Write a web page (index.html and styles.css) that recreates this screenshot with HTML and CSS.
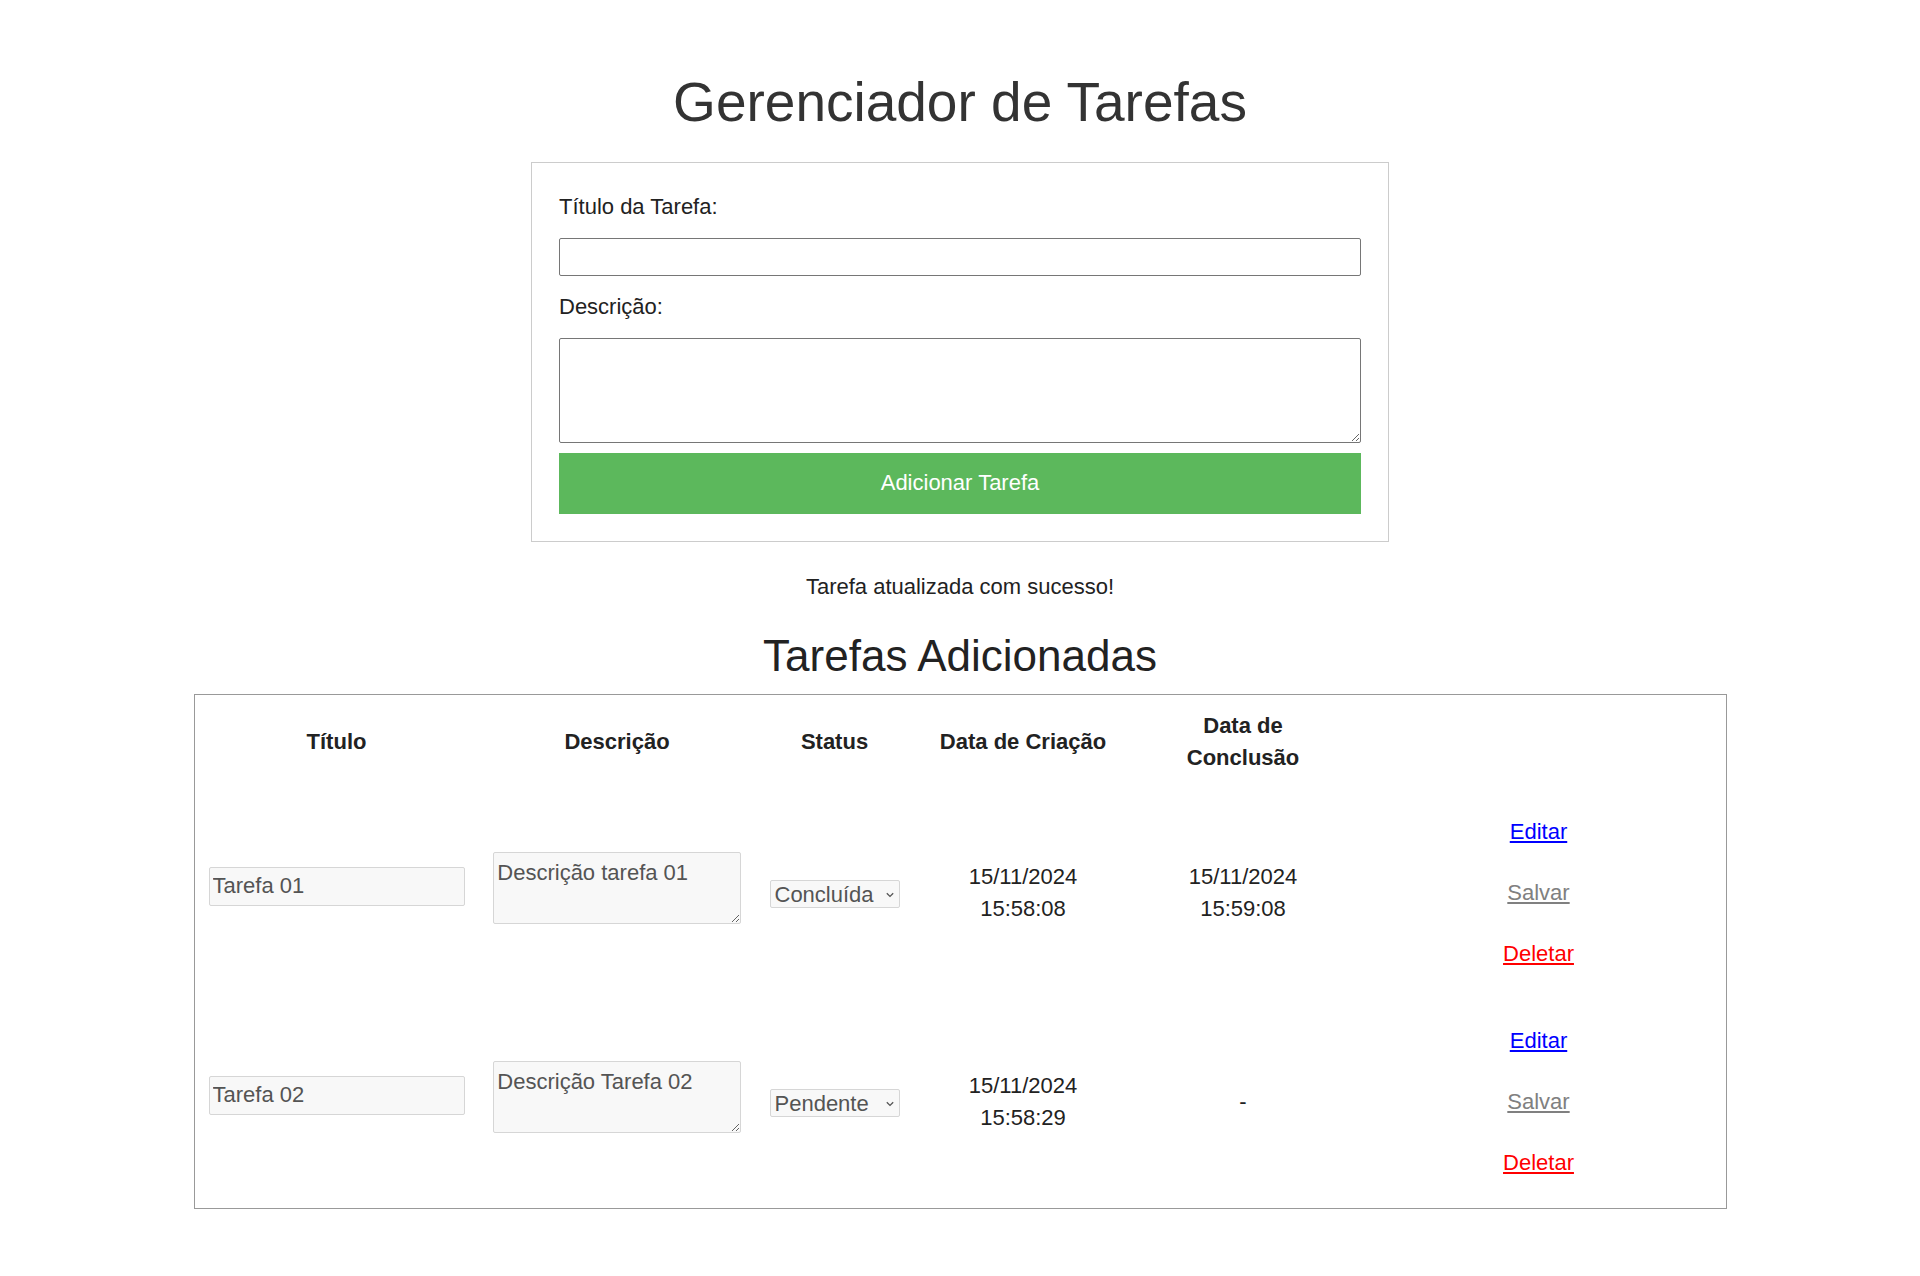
FILE: index.html
```html
<!DOCTYPE html>
<html lang="pt-BR">
<head>
<meta charset="utf-8">
<title>Gerenciador de Tarefas</title>
<link rel="stylesheet" href="styles.css">
</head>
<body>
  <h1 class="page-title">Gerenciador de Tarefas</h1>

  <form class="task-form">
    <label class="field-label" for="titulo">Título da Tarefa:</label>
    <input class="field-input" id="titulo" type="text">
    <label class="field-label" for="descricao">Descrição:</label>
    <textarea class="field-textarea" id="descricao"></textarea>
    <button class="add-btn" type="button">Adicionar Tarefa</button>
  </form>

  <p class="message">Tarefa atualizada com sucesso!</p>

  <h2 class="section-title">Tarefas Adicionadas</h2>

  <table class="tasks">
    <colgroup>
      <col class="c-title">
      <col class="c-desc">
      <col class="c-status">
      <col class="c-created">
      <col class="c-done">
      <col class="c-actions">
    </colgroup>
    <thead>
      <tr>
        <th>Título</th>
        <th>Descrição</th>
        <th>Status</th>
        <th>Data de Criação</th>
        <th>Data de<br>Conclusão</th>
        <th></th>
      </tr>
    </thead>
    <tbody>
      <tr>
        <td><input class="cell-input" type="text" value="Tarefa 01" readonly></td>
        <td><textarea class="cell-textarea" readonly>Descrição tarefa 01</textarea></td>
        <td>
          <span class="select-wrap">
            <select class="status">
              <option>Pendente</option>
              <option selected>Concluída</option>
            </select>
            <svg class="chevron" viewBox="0 0 8 6" aria-hidden="true"><path d="M0.8 1.2 L4 4.4 L7.2 1.2"/></svg>
          </span>
        </td>
        <td class="date">15/11/2024<br>15:58:08</td>
        <td class="date">15/11/2024<br>15:59:08</td>
        <td>
          <div class="actions">
            <a class="link edit" href="#">Editar</a>
            <a class="link save" href="#">Salvar</a>
            <a class="link delete" href="#">Deletar</a>
          </div>
        </td>
      </tr>
      <tr>
        <td><input class="cell-input" type="text" value="Tarefa 02" readonly></td>
        <td><textarea class="cell-textarea" readonly>Descrição Tarefa 02</textarea></td>
        <td>
          <span class="select-wrap">
            <select class="status">
              <option selected>Pendente</option>
              <option>Concluída</option>
            </select>
            <svg class="chevron" viewBox="0 0 8 6" aria-hidden="true"><path d="M0.8 1.2 L4 4.4 L7.2 1.2"/></svg>
          </span>
        </td>
        <td class="date">15/11/2024<br>15:58:29</td>
        <td class="date">-</td>
        <td>
          <div class="actions">
            <a class="link edit" href="#">Editar</a>
            <a class="link save" href="#">Salvar</a>
            <a class="link delete" href="#">Deletar</a>
          </div>
        </td>
      </tr>
    </tbody>
  </table>
</body>
</html>
```

FILE: styles.css
```css
html, body {
  background: #ffffff;
}

body {
  margin: 0;
  font-family: "Liberation Sans", Arial, sans-serif;
  font-size: 22px;
  line-height: 32.4px;
  color: #222222;
}

.page-title {
  margin: 71px 0 29px;
  font-size: 55px;
  line-height: 62px;
  font-weight: normal;
  text-align: center;
  color: #333333;
}

.task-form {
  box-sizing: border-box;
  width: 858px;
  margin: 0 auto;
  padding: 28px 27px 27px;
  border: 1px solid #cccccc;
}

.field-label {
  display: block;
  margin-bottom: 14.5px;
}

.field-input,
.field-textarea {
  display: block;
  box-sizing: border-box;
  width: 100%;
  border: 1px solid #767676;
  border-radius: 2px;
  background: #ffffff;
  font-family: inherit;
  font-size: 22px;
  color: #222222;
}

.field-input {
  height: 38.5px;
  margin: 0 0 15px;
  padding: 0 3px;
}

.field-textarea {
  height: 105px;
  margin: 0 0 9.4px;
  padding: 4px 3px;
  line-height: 32.4px;
}

.add-btn {
  display: block;
  width: 100%;
  height: 61.3px;
  border: 0;
  background: #5cb85c;
  color: #ffffff;
  font-family: inherit;
  font-size: 22px;
  cursor: pointer;
}

.message {
  margin: 28.7px 0 0;
  text-align: center;
}

.section-title {
  margin: 27.9px 0 13.2px;
  font-size: 44px;
  line-height: 49.6px;
  font-weight: normal;
  text-align: center;
}

.tasks {
  width: 1533px;
  margin: 0 auto;
  border: 1px solid #999999;
  border-collapse: separate;
  border-spacing: 2px;
  table-layout: fixed;
}

.c-title { width: 280px; }
.c-desc { width: 277px; }
.c-status { width: 154px; }
.c-created { width: 219px; }
.c-done { width: 217px; }
.c-actions { width: 370px; }

.tasks th {
  padding: 13px 12px;
  font-weight: bold;
  text-align: center;
  vertical-align: middle;
}

.tasks td {
  padding: 12px;
  text-align: center;
  vertical-align: middle;
}

.cell-input,
.cell-textarea {
  box-sizing: border-box;
  display: block;
  border: 1px solid #d6d6d6;
  border-radius: 2px;
  background: #f8f8f8;
  color: #545454;
  font-family: inherit;
  font-size: 22px;
}

.cell-input {
  width: 100%;
  height: 39.5px;
  margin: 0 0 13.5px;
  padding: 0 3px;
}

.cell-textarea {
  width: 247.4px;
  height: 72px;
  margin: 0 auto 9.4px;
  padding: 4px 3px;
  line-height: 32.4px;
}

.select-wrap {
  position: relative;
  display: inline-block;
  vertical-align: middle;
}

.status {
  display: block;
  box-sizing: border-box;
  width: 130px;
  height: 28.4px;
  margin: 0;
  padding: 0 0 0 4px;
  border: 1px solid #d6d6d6;
  border-radius: 2px;
  background-color: #f8f8f8;
  color: #545454;
  font-family: inherit;
  font-size: 22px;
  -webkit-appearance: none;
  appearance: none;
}

.chevron {
  position: absolute;
  right: 6px;
  top: 50%;
  width: 8px;
  height: 6px;
  margin-top: -2.5px;
  fill: none;
  stroke: #555555;
  stroke-width: 1.3;
  pointer-events: none;
}

.date {
  color: #222222;
}

.actions {
  display: flex;
  flex-direction: column;
  align-items: center;
  gap: 28.5px;
  padding: 14.4px 0;
}

.link {
  text-decoration: underline;
}

.edit { color: #0000ff; }
.save { color: #808080; }
.delete { color: #ff0000; }
```
